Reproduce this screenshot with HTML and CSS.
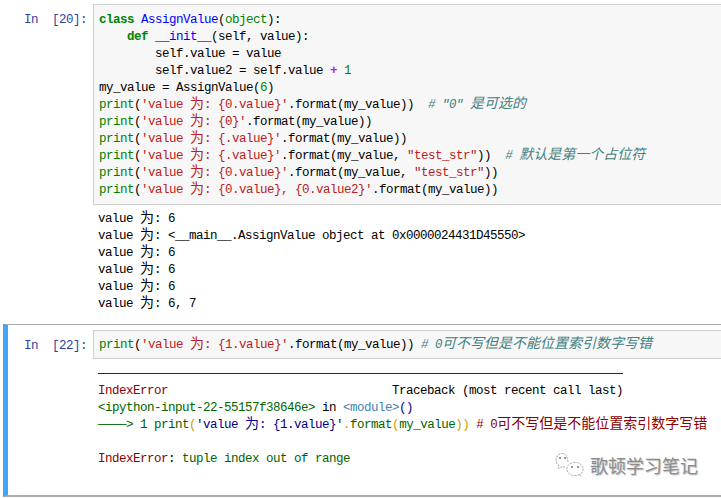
FILE: index.html
```html
<!DOCTYPE html>
<html lang="zh">
<head>
<meta charset="utf-8">
<title>Notebook</title>
<link rel="stylesheet" href="styles.css">
</head>
<body>
<main class="notebook">
  <section class="cell">
    <div class="prompt">In  [20]:</div>
    <div class="body">
<pre class="input"><span class="kw">class</span> <span class="def">AssignValue</span>(<span class="bi">object</span>):
    <span class="kw">def</span> <span class="def">__init__</span>(self, value):
        self.value = value
        self.value2 = self.value <span class="op">+</span> <span class="bi">1</span>
my_value = AssignValue(<span class="bi">6</span>)
<span class="bi">print</span>(<span class="str">'value <span class="cjk">为</span>: {0.value}'</span>.format(my_value))  <span class="com"># "0" <span class="cjk">是可选的</span></span>
<span class="bi">print</span>(<span class="str">'value <span class="cjk">为</span>: {0}'</span>.format(my_value))
<span class="bi">print</span>(<span class="str">'value <span class="cjk">为</span>: {.value}'</span>.format(my_value))
<span class="bi">print</span>(<span class="str">'value <span class="cjk">为</span>: {.value}'</span>.format(my_value, <span class="str">"test_str"</span>))  <span class="com"># <span class="cjk">默认是第一个占位符</span></span>
<span class="bi">print</span>(<span class="str">'value <span class="cjk">为</span>: {0.value}'</span>.format(my_value, <span class="str">"test_str"</span>))
<span class="bi">print</span>(<span class="str">'value <span class="cjk">为</span>: {0.value}, {0.value2}'</span>.format(my_value))</pre>
<pre class="output">value <span class="cjk">为</span>: 6
value <span class="cjk">为</span>: &lt;__main__.AssignValue object at 0x0000024431D45550&gt;
value <span class="cjk">为</span>: 6
value <span class="cjk">为</span>: 6
value <span class="cjk">为</span>: 6
value <span class="cjk">为</span>: 6, 7</pre>
    </div>
  </section>

  <section class="cell cell-selected">
    <div class="prompt">In  [22]:</div>
    <div class="body">
<pre class="input input-single"><span class="bi">print</span>(<span class="str">'value <span class="cjk">为</span>: {1.value}'</span>.format(my_value)) <span class="com"># 0<span class="cjk">可不写但是不能位置索引数字写错</span></span></pre>
<div class="rule"></div>
<pre class="output output-error"><span class="err">IndexError</span>                                Traceback (most recent call last)
<span class="tb-green">&lt;ipython-input-22-55157f38646e&gt;</span> in <span class="tb-blue">&lt;module&gt;</span><span class="tb-navy">()</span>
<span class="tb-green">────&gt; 1 print</span><span class="tb-gold">(</span><span class="tb-navy">'value <span class="cjk">为</span>: {1.value}'</span><span class="tb-gold">.</span><span class="tb-green">format</span><span class="tb-gold">(</span><span class="tb-green">my_value</span><span class="tb-gold">))</span> <span class="err"># 0<span class="cjk">可不写但是不能位置索引数字写错</span></span>

<span class="err">IndexError</span>: <span class="tb-green">tuple index out of range</span></pre>
    </div>
  </section>
</main>

<div class="watermark">
  <svg class="wm-icon" width="29" height="25" viewBox="0 0 29 25" fill="none" stroke="#a8a8a8" stroke-width="1" stroke-dasharray="2.2 1.1" aria-hidden="true">
    <path d="M13 10C12.5 4.5 10.5 1.5 7.5 1.5C3.5 1.5 1 4.5 1 8C1 10.5 2.2 12.5 4 13.5L3.4 16.5L6.6 14.8C7.6 15 8.5 15 10 15"/>
    <ellipse cx="20" cy="17" rx="8.2" ry="6.6"/>
    <path d="M24.5 22.5L26 24.5"/>
    <circle cx="5" cy="6" r="1" fill="#777" stroke="none"/>
    <circle cx="10" cy="6" r="1" fill="#777" stroke="none"/>
    <circle cx="17" cy="15" r="1" fill="#777" stroke="none"/>
    <circle cx="23" cy="15" r="1" fill="#777" stroke="none"/>
  </svg>
  <span class="wm-text">歌顿学习笔记</span>
</div>
</body>
</html>
```
FILE: styles.css
```css
html, body {
  margin: 0;
  padding: 0;
  background: #fff;
}

body {
  position: relative;
  width: 721px;
  height: 498px;
  overflow: hidden;
}

.notebook {
  padding-top: 4px;
}

pre, .prompt {
  margin: 0;
  font-family: "Liberation Mono", monospace;
  font-size: 12.5px;
  letter-spacing: -0.5px;
  line-height: 17px;
  white-space: pre;
}

.cell {
  display: grid;
  grid-template-columns: 93px 1fr;
}

.cell-selected {
  grid-template-columns: 85px 1fr;
  margin: 11px 0 0 3px;
  padding: 5px 0 27px;
  border-top: 1px solid #ababab;
  border-bottom: 2px solid #ababab;
  border-left: 5px solid #42a5f5;
}

.prompt {
  padding: 8px 6px 0 0;
  text-align: right;
  color: #303f9f;
}

.body {
  min-width: 0;
}

.input {
  margin-right: -4px;
  padding: 7px 5px 5px;
  border: 1px solid #cfcfcf;
  background: #f7f7f7;
  color: #000;
}

.input-single {
  padding: 6px 5px 4px;
}

.output {
  margin: 6px 0 0 5px;
  color: #000;
}

.output-error {
  margin-top: 9px;
}

.rule {
  width: 525px;
  height: 1px;
  margin: 14px 0 0 5px;
  background: #8b0000;
}

.cjk {
  font-family: "Noto Sans CJK SC", sans-serif;
  font-size: 14px;
  letter-spacing: 0;
  line-height: 0;
}

.kw { color: #008000; font-weight: bold; }
.def { color: #0000ff; }
.bi { color: #008000; }
.op { color: #aa22ff; font-weight: bold; }
.str { color: #ba2121; }
.com { color: #408080; font-style: italic; }

.err { color: #8b0000; }
.tb-green { color: #006400; }
.tb-blue { color: #4682b4; }
.tb-navy { color: #00008b; }
.tb-gold { color: #c9a100; }

.watermark {
  position: absolute;
  left: 555px;
  top: 452px;
  display: flex;
  align-items: center;
  gap: 6px;
}

.wm-text {
  font-family: "Noto Sans CJK SC", sans-serif;
  font-size: 18px;
  line-height: 24px;
  color: #8c8c8c;
  text-shadow: 1px 1px 1px rgba(0, 0, 0, 0.25);
}
```
